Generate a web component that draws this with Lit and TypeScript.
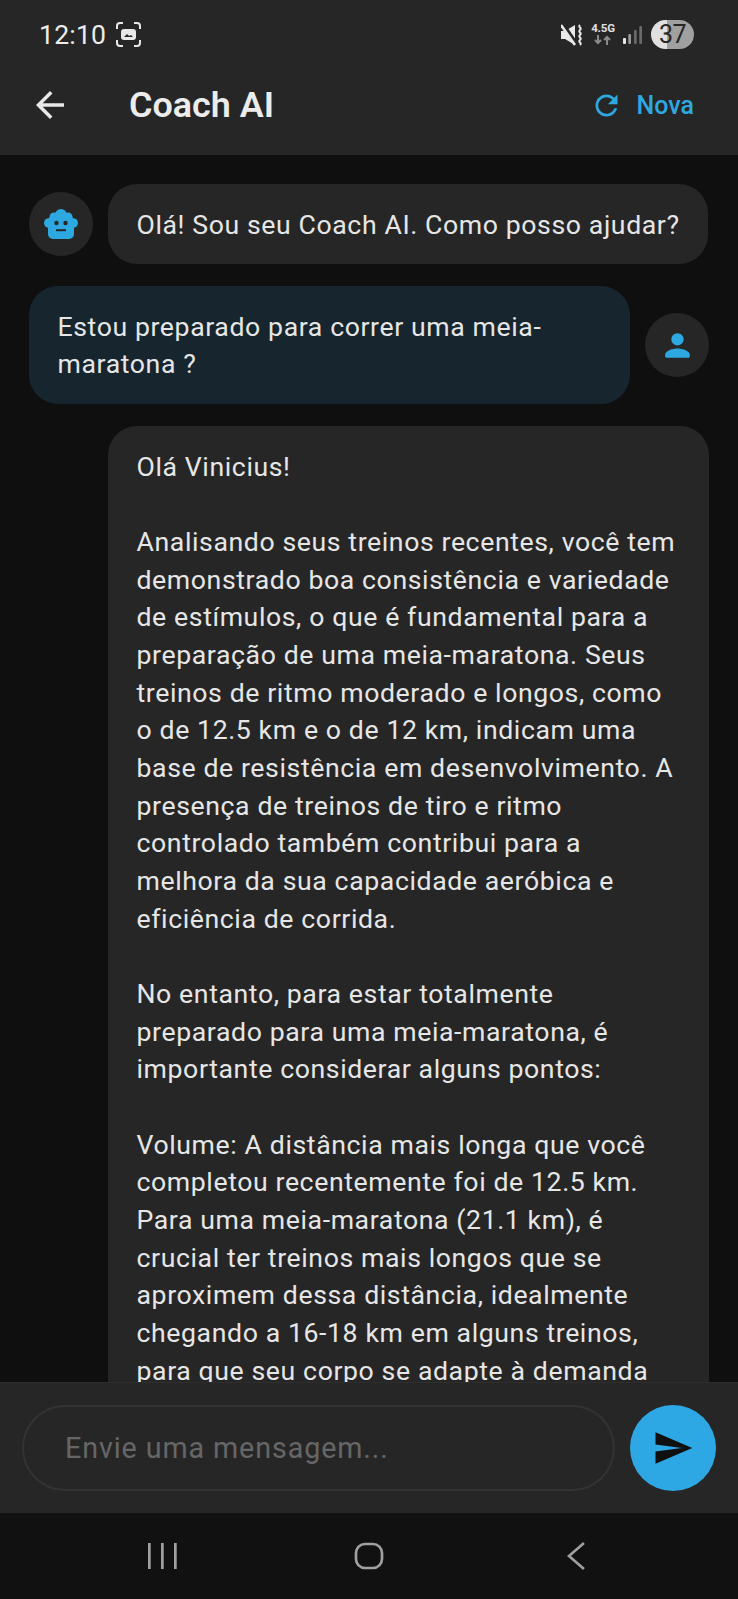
import { LitElement, html, css, svg } from "lit";
import { customElement } from "lit/decorators.js";

const icon = (d: string, size: number, cls = "") => html`<svg class=${cls} width=${size} height=${size} viewBox="0 0 24 24" fill="currentColor" aria-hidden="true">${svg`<path d=${d}></path>`}</svg>`;

const BACK = "M20 11H7.83l5.59-5.59L12 4l-8 8 8 8 1.41-1.41L7.83 13H20v-2z";
const REFRESH = "M17.65 6.35C16.2 4.9 14.21 4 12 4c-4.42 0-7.99 3.58-7.99 8s3.57 8 7.99 8c3.73 0 6.84-2.55 7.73-6h-2.08c-.82 2.33-3.04 4-5.65 4-3.31 0-6-2.69-6-6s2.69-6 6-6c1.66 0 3.14.69 4.22 1.78L13 11h7V4l-2.35 2.35z";
const PERSON = "M12 12c2.21 0 4-1.79 4-4s-1.79-4-4-4-4 1.79-4 4 1.79 4 4 4zm0 2c-2.67 0-8 1.34-8 4v1c0 .55.45 1 1 1h14c.55 0 1-.45 1-1v-1c0-2.66-5.33-4-8-4z";
const SEND = "M2.01 21L23 12 2.01 3 2 10l15 2-15 2z";

const LONG = `Olá Vinicius!

Analisando seus treinos recentes, você tem demonstrado boa consistência e variedade de estímulos, o que é fundamental para a preparação de uma meia-maratona. Seus treinos de ritmo moderado e longos, como o de 12.5 km e o de 12 km, indicam uma base de resistência em desenvolvimento. A presença de treinos de tiro e ritmo controlado também contribui para a melhora da sua capacidade aeróbica e eficiência de corrida.

No entanto, para estar totalmente preparado para uma meia-maratona, é importante considerar alguns pontos:

Volume: A distância mais longa que você completou recentemente foi de 12.5 km. Para uma meia-maratona (21.1 km), é crucial ter treinos mais longos que se aproximem dessa distância, idealmente chegando a 16-18 km em alguns treinos, para que seu corpo se adapte à demanda`;

@customElement("app-root")
export class AppRoot extends LitElement {
  static styles = css`
    :host {
      display: flex;
      flex-direction: column;
      width: 738px;
      height: 1599px;
      overflow: hidden;
      background: #0f0f0f;
      font-family: Roboto, "Noto Sans", sans-serif;
      color: #e8e8e8;
    }
    svg { display: block; flex: none; }
    .header { background: #262626; height: 155px; flex: none; box-sizing: border-box; }
    .status {
      height: 69px;
      display: flex;
      align-items: center;
      padding: 0 44px 0 39px;
    }
    .time { font-size: 26.6px; color: #ececec; letter-spacing: 0.2px; }
    .shot { margin-left: 10px; }
    .status-right { margin-left: auto; display: flex; align-items: center; }
    .net { width: 24px; margin: 0 8px; display: flex; flex-direction: column; align-items: center; gap: 2px; }
    .net span { font-size: 11.5px; font-weight: 700; line-height: 9px; color: #e0e0e0; letter-spacing: -0.2px; }
    .battery {
      margin-left: 9px;
      width: 43px;
      height: 29px;
      border-radius: 15px;
      background: linear-gradient(90deg, #e0e0e0 0 16px, #a0a0a0 16px);
      color: #262626;
      font-size: 25px;
      letter-spacing: -0.5px;
      display: flex;
      align-items: center;
      justify-content: center;
    }
    .appbar {
      height: 72px;
      display: flex;
      align-items: center;
      padding: 0 44px 0 29px;
    }
    .title { margin-left: 58px; font-size: 35.9px; font-weight: 600; color: #ececec; }
    .nova { margin-left: auto; display: flex; align-items: center; gap: 14px; color: #2ea8e0; font-size: 25px; font-weight: 500; }
    .list {
      flex: 1;
      min-height: 0;
      overflow: hidden;
      display: flex;
      flex-direction: column;
      gap: 22px;
      padding: 29px 29px 0;
    }
    .row { display: flex; align-items: center; gap: 15px; flex: none; }
    .row.end { justify-content: flex-end; }
    .avatar {
      width: 64px;
      height: 64px;
      border-radius: 50%;
      background: #262626;
      color: #2ea8e0;
      display: flex;
      align-items: center;
      justify-content: center;
      flex: none;
    }
    .bubble {
      box-sizing: border-box;
      max-width: 601px;
      padding: 22.5px 28px 20px 28.5px;
      border-radius: 29px;
      background: #262626;
      font-size: 26.65px;
      line-height: 37.67px;
      letter-spacing: 0.6px;
      color: #e6e6e6;
      white-space: pre-line;
    }
    .bubble.user { background: #17252e; width: 601px; }
    .bubble.long { margin-left: 79px; width: 601px; flex: none; }
    .composer {
      height: 131px;
      flex: none;
      box-sizing: border-box;
      background: #262626;
      border-top: 1px solid #2e2e2e;
      display: flex;
      align-items: center;
      gap: 15px;
      padding: 0 22px;
    }
    .input {
      flex: 1;
      height: 86px;
      box-sizing: border-box;
      border: 2px solid #333;
      border-radius: 43px;
      display: flex;
      align-items: center;
      padding-left: 41px;
      font-size: 28.7px;
      letter-spacing: 0.9px;
      color: #666;
    }
    .sendbtn {
      width: 86px;
      height: 86px;
      border-radius: 50%;
      background: #2ea8e4;
      color: #101010;
      display: flex;
      align-items: center;
      justify-content: center;
      flex: none;
    }
    .nav {
      height: 86px;
      flex: none;
      background: #111;
      display: grid;
      grid-template-columns: repeat(3, 1fr);
      align-items: center;
      justify-items: center;
      padding: 0 59px;
    }
  `;

  render() {
    return html`
      <div class="header">
        <div class="status">
          <span class="time">12:10</span>
          <svg class="shot" width="25" height="25" viewBox="0 0 25 25" fill="none" stroke="#e8e8e8" stroke-width="2" aria-hidden="true">
            <path d="M1 7V4a3 3 0 0 1 3-3h3M18 1h3a3 3 0 0 1 3 3v3M24 18v3a3 3 0 0 1-3 3h-3M7 24H4a3 3 0 0 1-3-3v-3"></path>
            <rect x="5" y="7" width="15" height="11" rx="3" fill="#e8e8e8" stroke="none"></rect>
            <path d="M8 15l3-3 2 2 2-1 2 2z" fill="#262626" stroke="none"></path>
          </svg>
          <div class="status-right">
            <svg width="22" height="22" viewBox="0 0 22 22" aria-hidden="true">
              <path d="M0 7h4l10-6v20L4 15H0z" fill="#e8e8e8"></path>
              <path d="M2 0l13 19" stroke="#262626" stroke-width="3.5"></path>
              <path d="M0 1l14 20" stroke="#e8e8e8" stroke-width="2.6"></path>
              <path d="M19 1c-2.5 2 2.5 3 0 5s2.5 3 0 5 2.5 3 0 5 2.5 3 0 5" fill="none" stroke="#e8e8e8" stroke-width="2"></path>
            </svg>
            <div class="net">
              <span>4.5G</span>
              <svg width="18" height="10" viewBox="0 0 18 10" fill="none" stroke-width="2" aria-hidden="true">
                <path d="M4 0v8M1 5l3 3 3-3" stroke="#8a8a8a"></path>
                <path d="M13 10V2M10 5l3-3 3 3" stroke="#8a8a8a"></path>
              </svg>
            </div>
            <svg width="19" height="18" viewBox="0 0 19 18" aria-hidden="true">
              <rect x="0" y="12" width="3" height="6" rx="1" fill="#e8e8e8"></rect>
              <rect x="5.3" y="8" width="2.7" height="10" rx="1" fill="#9a9a9a"></rect>
              <rect x="11" y="4" width="2.7" height="14" rx="1" fill="#6a6a6a"></rect>
              <rect x="16.3" y="0" width="2.7" height="18" rx="1" fill="#6a6a6a"></rect>
            </svg>
            <div class="battery">37</div>
          </div>
        </div>
        <div class="appbar">
          ${icon(BACK, 42)}
          <span class="title">Coach AI</span>
          <div class="nova">${icon(REFRESH, 33)}<span>Nova</span></div>
        </div>
      </div>

      <div class="list">
        <div class="row">
          <div class="avatar">
            <svg width="34" height="30" viewBox="0 0 34 30" fill="#2ea8e0" aria-hidden="true">
              <circle cx="17" cy="6" r="6"></circle>
              <circle cx="10" cy="8" r="4.5"></circle>
              <circle cx="24" cy="8" r="4.5"></circle>
              <rect x="4" y="7" width="26" height="23" rx="5"></rect>
              <circle cx="4.8" cy="14" r="4.8"></circle>
              <circle cx="29.2" cy="14" r="4.8"></circle>
              <circle cx="12.5" cy="14" r="2.2" fill="#262626"></circle>
              <circle cx="21.5" cy="14" r="2.2" fill="#262626"></circle>
              <rect x="12" y="20.2" width="10" height="2" fill="#262626"></rect>
            </svg>
          </div>
          <div class="bubble">Olá! Sou seu Coach AI. Como posso ajudar?</div>
        </div>
        <div class="row end">
          <div class="bubble user">Estou preparado para correr uma meia-maratona ?</div>
          <div class="avatar">${icon(PERSON, 37)}</div>
        </div>
        <div class="bubble long">${LONG}</div>
      </div>

      <div class="composer">
        <div class="input">Envie uma mensagem...</div>
        <div class="sendbtn">${icon(SEND, 42)}</div>
      </div>

      <div class="nav">
        <svg width="30" height="28" viewBox="0 0 30 28" fill="#a0a0a0" aria-hidden="true">
          <rect x="1" y="1" width="2.7" height="26"></rect><rect x="14" y="1" width="2.7" height="26"></rect><rect x="27" y="1" width="2.7" height="26"></rect>
        </svg>
        <svg width="30" height="28" viewBox="0 0 30 28" fill="none" stroke="#a0a0a0" stroke-width="2.7" aria-hidden="true">
          <rect x="2" y="2" width="26" height="24" rx="9"></rect>
        </svg>
        <svg width="20" height="30" viewBox="0 0 20 30" fill="none" stroke="#a0a0a0" stroke-width="2.6" aria-hidden="true">
          <path d="M18 2L3 15l15 13"></path>
        </svg>
      </div>
    `;
  }
}
